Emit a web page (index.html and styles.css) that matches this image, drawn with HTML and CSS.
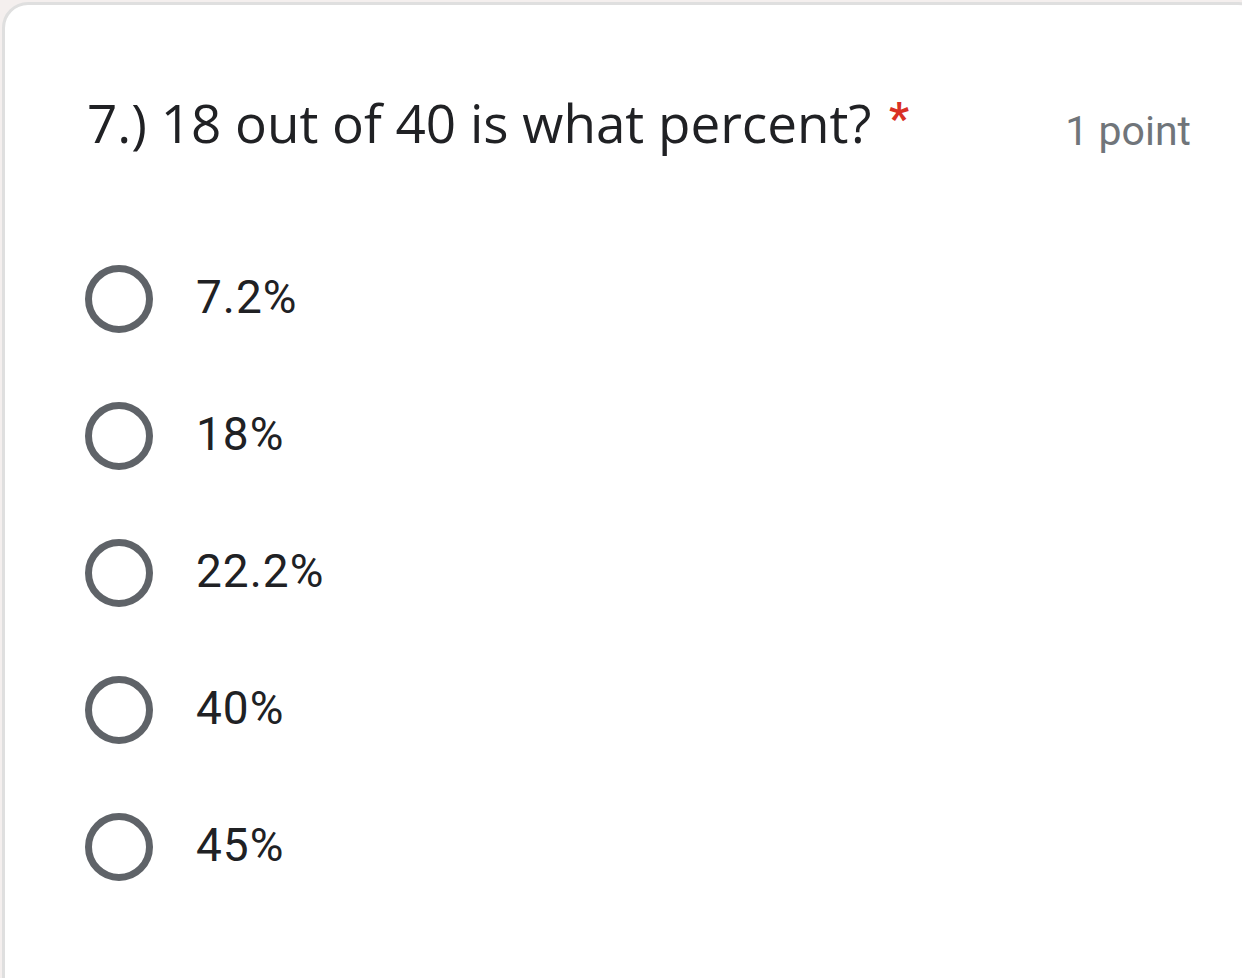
FILE: index.html
```html
<!DOCTYPE html>
<html>
<head>
<meta charset="utf-8">
<link rel="stylesheet" href="styles.css">
</head>
<body>
<div class="card">
  <div class="header">
    <div class="title">7.) 18 out of 40 is what percent? <span class="req">*</span></div>
    <div class="points">1 point</div>
  </div>
  <div class="options">
    <div class="option"><span class="radio"></span><span class="label">7.2%</span></div>
    <div class="option"><span class="radio"></span><span class="label">18%</span></div>
    <div class="option"><span class="radio"></span><span class="label">22.2%</span></div>
    <div class="option"><span class="radio"></span><span class="label">40%</span></div>
    <div class="option"><span class="radio"></span><span class="label">45%</span></div>
  </div>
</div>
</body>
</html>
```

FILE: styles.css
```css
html, body {
  margin: 0;
  padding: 0;
  width: 1242px;
  height: 978px;
  overflow: hidden;
  background: #f4efee;
}
.card {
  box-sizing: border-box;
  margin: 2px 0 0 2px;
  width: 1262px;
  height: 1100px;
  background: #ffffff;
  border: 3px solid #dfdfdf;
  border-radius: 26px;
  padding: 82px 70px 0 82px;
}
.header {
  display: flex;
  justify-content: space-between;
  align-items: baseline;
}
.title {
  font-family: "Open Sans", "Lato", sans-serif;
  font-size: 53px;
  line-height: 72px;
  color: #202124;
  letter-spacing: 0;
}
.req {
  font-family: Roboto, sans-serif;
  color: #d93025;
  font-size: 44px;
  font-weight: 700;
  line-height: 0;
  margin-left: 4px;
  position: relative;
  top: -9px;
}
.points {
  font-family: Roboto, "Noto Sans", sans-serif;
  font-size: 41px;
  color: #70757a;
  letter-spacing: 0;
  position: relative;
  top: 2px;
}
.options {
  margin-top: 71px;
  display: flex;
  flex-direction: column;
}
.option {
  display: flex;
  align-items: center;
  height: 137px;
}
.radio {
  box-sizing: border-box;
  width: 68px;
  height: 68px;
  border: 7px solid #5f6368;
  border-radius: 50%;
  margin-left: -2px;
  flex: none;
}
.label {
  margin-left: 43px;
  margin-bottom: 4px;
  font-family: Roboto, "Noto Sans", sans-serif;
  font-size: 46px;
  line-height: 54px;
  color: #202124;
  letter-spacing: 1px;
}
```
